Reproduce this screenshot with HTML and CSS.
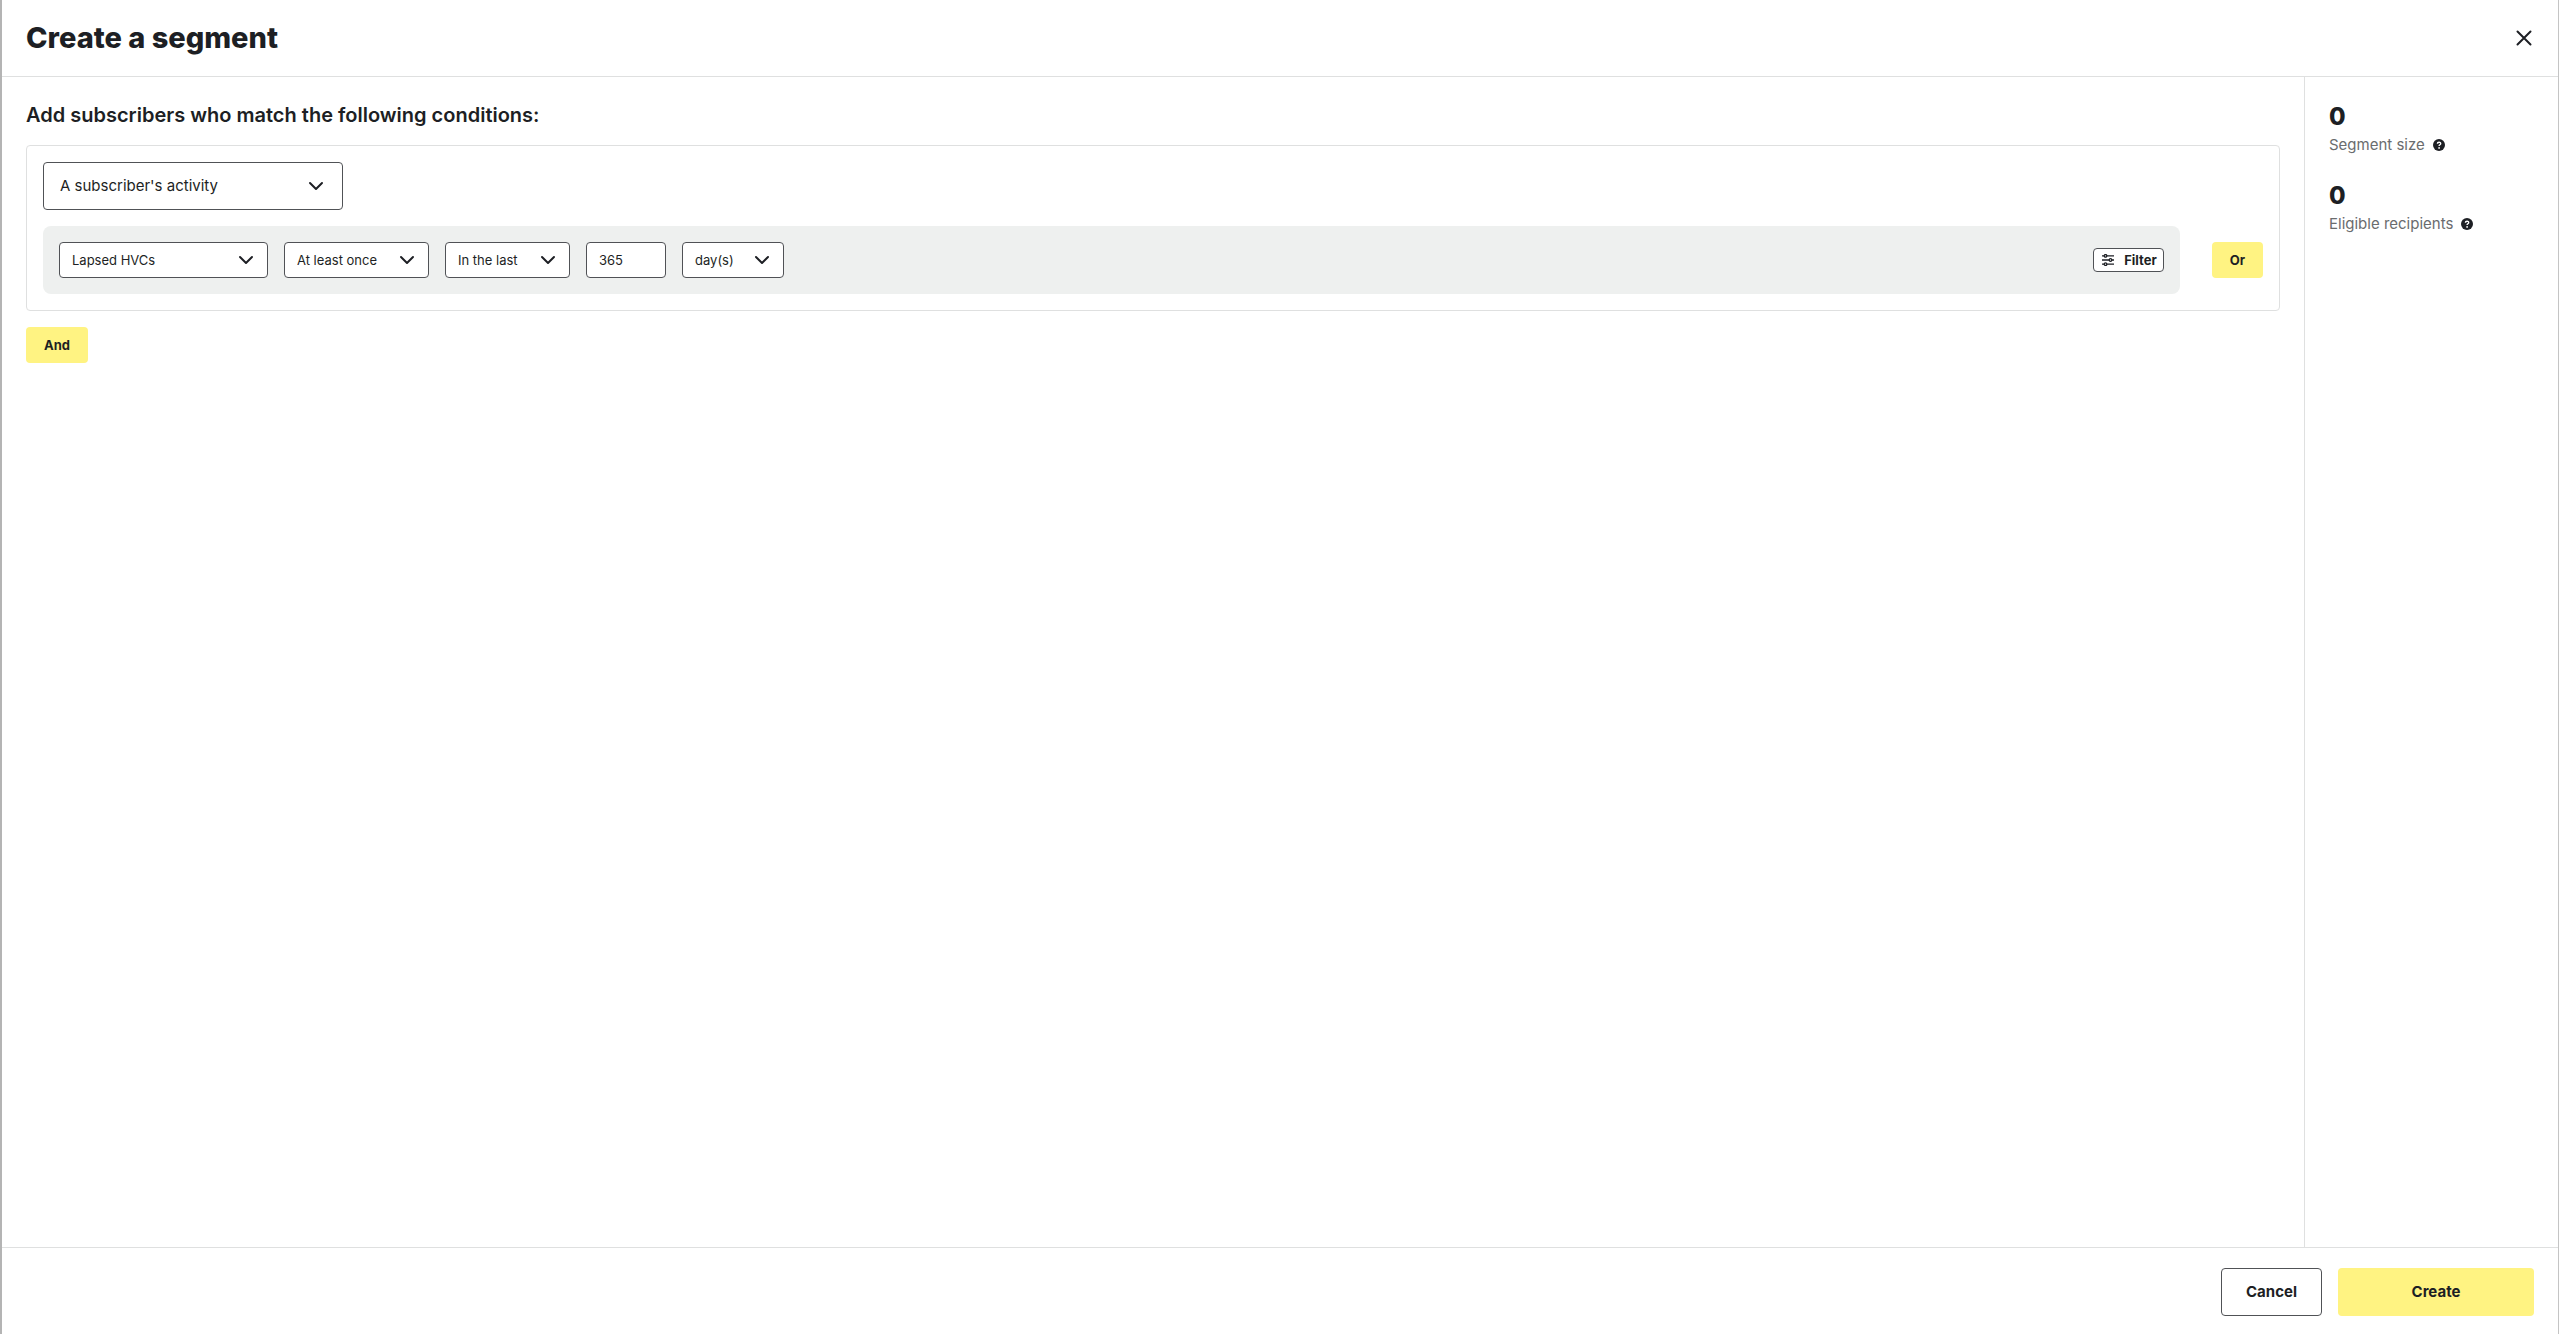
FILE: index.html
```html
<!DOCTYPE html>
<html lang="en">
<head>
<meta charset="utf-8">
<title>Create a segment</title>
<link rel="stylesheet" href="styles.css">
</head>
<body>
<svg class="symbols" aria-hidden="true">
  <symbol id="chevron" viewBox="0 0 16 16"><path d="M2 5 L8 11 L14 5" fill="none" stroke="currentColor" stroke-width="2" stroke-linecap="round" stroke-linejoin="round"/></symbol>
  <symbol id="help" viewBox="0 0 12 12"><circle cx="6" cy="6" r="6" fill="currentColor"/><path d="M4.4 4.8 C4.4 2.7 7.7 2.7 7.7 4.7 C7.7 5.8 6.1 5.8 6.1 7" fill="none" stroke="#fff" stroke-width="1.4"/><circle cx="6.1" cy="8.9" r="0.9" fill="#fff"/></symbol>
</svg>
<div class="dialog" role="dialog" aria-labelledby="title">
  <header class="header">
    <h1 class="title" id="title">Create a segment</h1>
    <button class="close" type="button" aria-label="Close">
      <svg width="16" height="16" viewBox="0 0 16 16"><path d="M1.5 1.5 L14.5 14.5 M14.5 1.5 L1.5 14.5" stroke="currentColor" stroke-width="2" stroke-linecap="round"/></svg>
    </button>
  </header>
  <div class="content">
    <main class="main">
      <h2 class="heading">Add subscribers who match the following conditions:</h2>
      <section class="card">
        <div class="select select-large">
          <select aria-label="Condition type"><option>A subscriber's activity</option></select>
          <svg><use href="#chevron"/></svg>
        </div>
        <div class="row">
          <div class="condition">
            <div class="select select-event">
              <select aria-label="Event"><option>Lapsed HVCs</option></select>
              <svg><use href="#chevron"/></svg>
            </div>
            <div class="select select-count">
              <select aria-label="Frequency"><option>At least once</option></select>
              <svg><use href="#chevron"/></svg>
            </div>
            <div class="select select-range">
              <select aria-label="Range"><option>In the last</option></select>
              <svg><use href="#chevron"/></svg>
            </div>
            <input class="number" type="text" inputmode="numeric" aria-label="Amount" value="365">
            <div class="select select-unit">
              <select aria-label="Unit"><option>day(s)</option></select>
              <svg><use href="#chevron"/></svg>
            </div>
            <button class="filter" type="button">
              <svg width="12" height="12" viewBox="0 0 12 12" fill="none" stroke="currentColor" stroke-width="1.3"><path d="M0 1.8H2.1M4.9 1.8H12M0 6H7.1M9.9 6H12M0 10.2H2.1M4.9 10.2H12"/><circle cx="3.5" cy="1.8" r="1.3"/><circle cx="8.5" cy="6" r="1.3"/><circle cx="3.5" cy="10.2" r="1.3"/></svg>
              Filter
            </button>
          </div>
          <button class="button button-small" type="button">Or</button>
        </div>
      </section>
      <button class="button button-small" type="button">And</button>
    </main>
    <aside class="sidebar">
      <div class="stat">
        <p class="value">0</p>
        <p class="label">Segment size <svg><use href="#help"/></svg></p>
      </div>
      <div class="stat">
        <p class="value">0</p>
        <p class="label">Eligible recipients <svg><use href="#help"/></svg></p>
      </div>
    </aside>
  </div>
  <footer class="footer">
    <button class="button button-outline" type="button">Cancel</button>
    <button class="button button-create" type="button">Create</button>
  </footer>
</div>
</body>
</html>
```
FILE: styles.css
```css
* { box-sizing: border-box; }

body {
  margin: 0;
  color: #1d1f24;
  font: 15px/24px Inter, "Open Sans", sans-serif;
}

h1, h2, p { margin: 0; }

button, select, input { color: inherit; font: inherit; }

.symbols { display: none; }

.dialog {
  display: flex;
  flex-direction: column;
  min-height: 100vh;
  border-left: 2px solid #b4b4b4;
  border-right: 1px solid #c4c4c4;
  background: #fff;
}

.header {
  display: flex;
  align-items: center;
  justify-content: space-between;
  height: 77px;
  padding: 0 24px;
  border-bottom: 1px solid #dfe0e0;
}

.title { font-size: 29px; font-weight: 800; line-height: 36px; }

.close {
  display: flex;
  padding: 2px;
  border: 0;
  background: none;
}

.content { display: flex; flex: 1; }

.main {
  flex: 1;
  padding: 24px;
}

.heading {
  margin-bottom: 16px;
  font-size: 20px;
  font-weight: 600;
  line-height: 28px;
}

.card {
  margin-bottom: 16px;
  padding: 16px;
  border: 1px solid #dfe0e0;
  border-radius: 4px;
}

.row {
  display: flex;
  align-items: center;
  gap: 32px;
  margin-top: 16px;
}

.condition {
  display: flex;
  flex: 1;
  align-items: center;
  gap: 16px;
  padding: 16px;
  border-radius: 8px;
  background: #eef0ef;
}

.select { display: grid; align-items: center; font-size: 13px; }

.select select, .select svg { grid-area: 1 / 1; }

.select select, .number {
  width: 100%;
  height: 36px;
  padding: 0 12px;
  border: 1px solid #505256;
  border-radius: 4px;
  background: #fff;
  appearance: none;
}

.select svg {
  justify-self: end;
  width: 16px;
  height: 16px;
  margin-right: 14px;
  pointer-events: none;
}

.select-large { width: 300px; font-size: 15px; }
.select-large select { height: 48px; padding: 0 16px; }
.select-large svg { margin-right: 19px; }
.select-event { width: 209px; }
.select-count { width: 145px; }
.select-range { width: 125px; }
.select-unit { width: 102px; }
.condition .number { width: 80px; font-size: 13px; }

.filter {
  display: flex;
  align-items: center;
  gap: 10px;
  height: 24px;
  margin-left: auto;
  padding: 0 6px 0 8px;
  border: 1px solid #505256;
  border-radius: 4px;
  background: #fff;
  font-size: 13px;
  font-weight: 700;
}

.button {
  height: 48px;
  padding: 0 24px;
  border: 0;
  border-radius: 4px;
  background: #fff382;
  font-size: 15px;
  font-weight: 700;
}

.button-small { height: 36px; padding: 0 18px; font-size: 13px; }
.button-outline { border: 1px solid #505256; background: #fff; }
.button-create { width: 196px; }

.sidebar {
  width: 254px;
  padding: 24px;
  border-left: 1px solid #dfe0e0;
}

.stat { margin-bottom: 23px; }

.value { font-size: 24px; font-weight: 800; line-height: 32px; }

.label {
  display: flex;
  align-items: center;
  gap: 8px;
  color: #6a6c6e;
}

.label svg { width: 12px; height: 12px; color: #1d1f24; }

.footer {
  display: flex;
  align-items: center;
  justify-content: flex-end;
  gap: 16px;
  padding: 20px 24px 18px;
  border-top: 1px solid #dfe0e0;
}
```
